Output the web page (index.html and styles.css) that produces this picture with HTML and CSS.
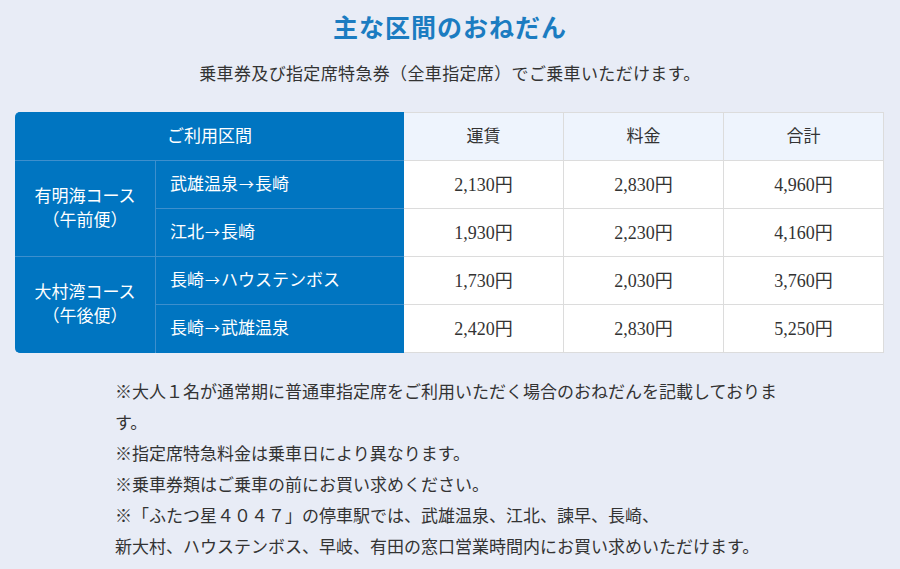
FILE: index.html
```html
<!DOCTYPE html>
<html lang="ja">
<head>
<meta charset="utf-8">
<title>主な区間のおねだん</title>
<link rel="stylesheet" href="styles.css">
</head>
<body>
<main class="page">
  <h1 class="title">主な区間のおねだん</h1>
  <p class="lead">乗車券及び指定席特急券（全車指定席）でご乗車いただけます。</p>
  <table class="fares">
    <colgroup>
      <col class="c-course">
      <col class="c-route">
      <col class="c-num">
      <col class="c-num">
      <col class="c-num">
    </colgroup>
    <thead>
      <tr>
        <th class="blue head-blue" colspan="2">ご利用区間</th>
        <th class="head-light">運賃</th>
        <th class="head-light">料金</th>
        <th class="head-light last">合計</th>
      </tr>
    </thead>
    <tbody>
      <tr>
        <th class="blue course" rowspan="2">有明海コース<br>（午前便）</th>
        <th class="blue route">武雄温泉<span class="arrow">→</span>長崎</th>
        <td>2,130円</td>
        <td>2,830円</td>
        <td class="last">4,960円</td>
      </tr>
      <tr>
        <th class="blue route">江北<span class="arrow">→</span>長崎</th>
        <td>1,930円</td>
        <td>2,230円</td>
        <td class="last">4,160円</td>
      </tr>
      <tr>
        <th class="blue course bottom-left" rowspan="2">大村湾コース<br>（午後便）</th>
        <th class="blue route">長崎<span class="arrow">→</span>ハウステンボス</th>
        <td>1,730円</td>
        <td>2,030円</td>
        <td class="last">3,760円</td>
      </tr>
      <tr>
        <th class="blue route bottom">長崎<span class="arrow">→</span>武雄温泉</th>
        <td>2,420円</td>
        <td>2,830円</td>
        <td class="last">5,250円</td>
      </tr>
    </tbody>
  </table>
  <div class="notes">
    <p>※大人１名が通常期に普通車指定席をご利用いただく場合のおねだんを記載しております。</p>
    <p>※指定席特急料金は乗車日により異なります。</p>
    <p>※乗車券類はご乗車の前にお買い求めください。</p>
    <p>※「ふたつ星４０４７」の停車駅では、武雄温泉、江北、諫早、長崎、<br>新大村、ハウステンボス、早岐、有田の窓口営業時間内にお買い求めいただけます。</p>
  </div>
</main>
</body>
</html>
```

FILE: styles.css
```css
html, body {
  margin: 0;
  padding: 0;
}
body {
  background: #e8ecf6;
  font-family: "Liberation Serif", "Noto Sans CJK JP", serif;
  color: #333333;
}
.page {
  padding: 8px 0 0 0;
}
.title {
  margin: 0;
  font-family: "Noto Sans CJK JP", sans-serif;
  font-weight: 700;
  font-size: 25px;
  letter-spacing: 1px;
  line-height: 36px;
  color: #1b7cc1;
  text-align: center;
}
.lead {
  margin: 18px 0 0 0;
  font-size: 17px;
  letter-spacing: 0.35px;
  line-height: 26px;
  text-align: center;
  color: #333333;
}
.fares {
  margin: 24px 0 0 15px;
  width: 869px;
  table-layout: fixed;
  border-collapse: separate;
  border-spacing: 0;
  font-size: 17px;
}
.c-course { width: 141px; }
.c-route { width: 248px; }
.c-num { width: 160px; }
.fares th,
.fares td {
  height: 47px;
  padding: 0;
  font-weight: 400;
  text-align: center;
  vertical-align: middle;
  line-height: 24px;
}
.fares td {
  background: #ffffff;
  border-right: 1px solid #dcdcdc;
  border-bottom: 1px solid #dcdcdc;
  color: #333333;
  font-size: 18px;
}
.fares .head-light {
  background: #eef4fd;
  border-top: 1px solid #dcdcdc;
  border-right: 1px solid #dcdcdc;
  border-bottom: 1px solid #dcdcdc;
  color: #333333;
}
.fares .blue {
  background: #0075c1;
  color: #ffffff;
  border-bottom: 1px solid #3d8fcd;
}
.fares .head-blue {
  border-top-left-radius: 5px;
  border-top: 1px solid #0075c1;
}
.fares .course {
  border-right: 1px solid #3d8fcd;
}
.fares .route {
  text-align: left;
  padding-left: 14px;
}
.arrow {
  font-family: "Noto Sans CJK JP", sans-serif;
  font-size: 15px;
  margin: 0 1px;
}
.fares .bottom-left {
  border-bottom-left-radius: 5px;
  border-bottom: 1px solid #0075c1;
}
.fares .bottom {
  border-bottom: 1px solid #0075c1;
}
.notes {
  margin: 24px 0 0 115px;
  width: 668px;
  font-size: 17px;
  line-height: 31px;
  color: #333333;
}
.notes p {
  margin: 0;
}
```
